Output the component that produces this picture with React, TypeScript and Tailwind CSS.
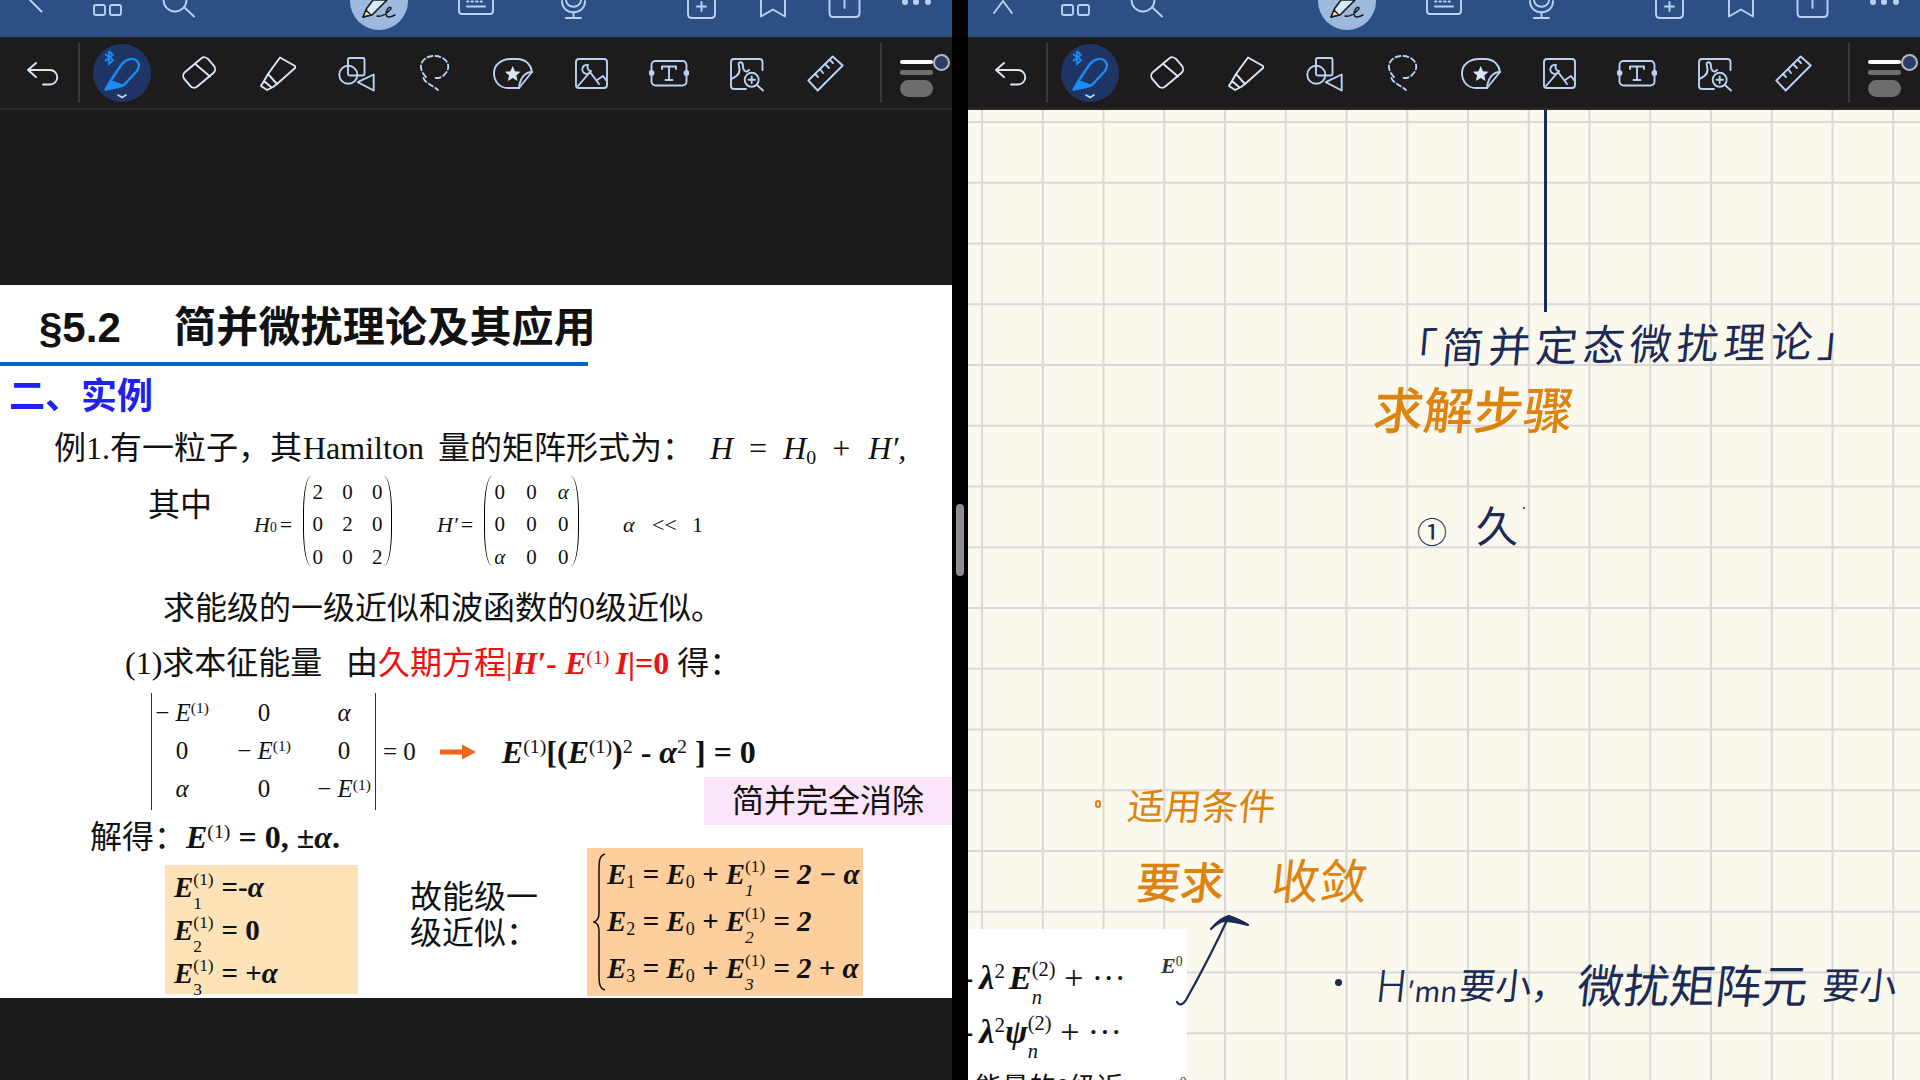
const stroke = { fill: 'none', stroke: '#b9d2f3', strokeWidth: 1.9, strokeLinecap: 'round', strokeLinejoin: 'round' } as const
const light = { ...stroke, stroke: '#dbe6f5' }

function TopBar({ close }: { close?: boolean }) {
  return (
    <div className="flex h-[37px] w-[952px] overflow-hidden bg-[#2c4f84]">
      <svg className="ml-[16px]" width="40" height="37" viewBox="16 0 40 37" {...stroke}>
        {close ? <path d="M26 13 L35 1 L44 13" /> : <path d="M30 0 L41.5 11.5" />}
      </svg>
      <svg className="ml-[31px]" width="40" height="37" viewBox="87 0 40 37" {...stroke}>
        <rect x="94" y="5" width="11" height="10" rx="2" />
        <rect x="110" y="5" width="11" height="10" rx="2" />
      </svg>
      <svg className="ml-[31px]" width="40" height="37" viewBox="158 0 40 37" {...stroke}>
        <circle cx="175" cy="0" r="11.5" />
        <path d="M185 8 L194 16.5" />
      </svg>
      <svg className="ml-[152px]" width="58" height="37" viewBox="350 0 58 37">
        <circle cx="379" cy="1" r="29" fill="#9db9dd" />
        <path d="M363 17 L367 8 L373 0 H387 L372 15 Z" fill="#d6ecfb" stroke="#1a1a1a" strokeWidth="1.6" strokeLinejoin="round" />
        <path d="M363 17 L366 10 L371 15 Z" fill="#f3dca6" stroke="#1a1a1a" strokeWidth="1.4" strokeLinejoin="round" />
        <path d="M377 16 C381 17 386 14 390 10 C393 7 389 6 387 10 C385 14 386 17 389 17 C391 17 393 16 395 15" fill="none" stroke="#1a1a1a" strokeWidth="1.5" strokeLinecap="round" />
      </svg>
      <svg className="ml-[48px]" width="40" height="37" viewBox="456 0 40 37" {...stroke}>
        <path d="M459 0 V11 C459 13 460 14 462 14 H490 C492 14 493 13 493 11 V0" />
        <path d="M467 6.5 H485" />
        <path d="M467 1.5 H485" strokeDasharray="1.5 3" />
      </svg>
      <svg className="ml-[57px]" width="40" height="37" viewBox="553 0 40 37" {...stroke}>
        <path d="M566 0 C566 9 581 9 581 0" />
        <path d="M562 1 C562 16 585 16 585 1" />
        <path d="M573.5 13 V18 M566 18 H581" />
      </svg>
      <svg className="ml-[88px]" width="40" height="37" viewBox="681 0 40 37" {...stroke}>
        <path d="M688 0 V14 C688 16.5 689.5 18 692 18 H711 C713.5 18 715 16.5 715 14 V0" />
        <path d="M701.5 2 V11 M697 6.5 H706" />
      </svg>
      <svg className="ml-[32px]" width="40" height="37" viewBox="753 0 40 37" {...stroke}>
        <path d="M761 0 V16.5 L773 9.5 L785 16.5 V0" />
      </svg>
      <svg className="ml-[31px]" width="40" height="37" viewBox="824 0 40 37" {...stroke}>
        <path d="M829.5 0 V13 C829.5 15.5 831 17 833.5 17 H855.5 C858 17 859.5 15.5 859.5 13 V0" />
        <path d="M844.5 0 V8" />
      </svg>
      <svg className="ml-[32px]" width="40" height="37" viewBox="896 0 40 37" fill="#b9d2f3">
        <circle cx="905" cy="2" r="3" />
        <circle cx="916" cy="2" r="3" />
        <circle cx="928" cy="2" r="3" />
      </svg>
    </div>
  )
}

function Tool({ children }: { children: React.ReactNode }) {
  return (
    <div className="flex w-[78.1px] shrink-0 items-center justify-center">
      <svg width="40" height="40" viewBox="0 0 40 40">
        {children}
      </svg>
    </div>
  )
}

function Toolbar() {
  return (
    <div className="flex h-[73px] w-[952px] border-t border-[#241f14] border-b-2 border-b-[#2c2a2b] bg-[#1d1b1c] pl-[3px]">
      <div className="flex w-[75px] shrink-0 items-center justify-center">
        <svg className="ml-[5px]" width="40" height="40" viewBox="0 0 40 40" {...light}>
          <path d="M13 10 L5 17 L13 24 M5 17 H27 A7.2 7.2 0 0 1 27 31.5 H20" />
        </svg>
      </div>
      <div className="my-[5px] mr-[3px] w-[2px] shrink-0 bg-[#3a3839]" />
      <div className="flex w-[78.1px] shrink-0 items-center justify-center">
        <svg width="58" height="60" viewBox="0 0 58 60">
          <circle cx="29" cy="30" r="29" fill="#1f3565" />
          <path d="M18 37 L29 21 C33 16 41 14 44 18 C47 21 46 25 44 28 L31 42 L25 44 L12.5 46.5 Z" fill="none" stroke="#1c8cf2" strokeWidth="2.4" strokeLinejoin="round" />
          <path d="M18 37 L31 42 L25 44 L12.5 46.5 Z" fill="#1c8cf2" />
          <path d="M16 8 V21 L20 17 L12 11 M16 8 L20 12 L12 18" fill="none" stroke="#1c8cf2" strokeWidth="1.8" />
          <path d="M25 52 L29 54.5 L33 52" fill="none" stroke="#c5d8f5" strokeWidth="1.6" strokeLinecap="round" />
        </svg>
      </div>
      <Tool>
        <g {...light}>
          <rect x="3.7" y="10" width="31" height="19" rx="5" transform="rotate(-40 19.2 19.5)" />
          <path d="M15 10.8 L30 23.5" />
        </g>
      </Tool>
      <Tool>
        <g {...light}>
          <path d="M22 4.5 L37 13 V15 L19 31 L10 21 Z" />
          <path d="M10 21 L6 28 L3 33 L9 37 L15 34 L19 31 M6 28 L13 34" />
        </g>
      </Tool>
      <Tool>
        <g {...stroke}>
          <rect x="12" y="5" width="16.5" height="17.5" rx="1.5" />
          <circle cx="12.3" cy="21.8" r="9" />
          <path d="M37.7 21.5 L21.7 29.2 L37.7 37.5 Z" />
        </g>
      </Tool>
      <Tool>
        <g {...stroke}>
          <path d="M12 24 C2 14 8 3 20 3 C33 3 39 14 30 22 C27 25 22 26 19 24" strokeDasharray="5 3" />
          <path d="M9.5 25 C11 30 18 32 24 37" strokeDasharray="5 3" />
        </g>
      </Tool>
      <Tool>
        <g {...stroke}>
          <path d="M26 35 H15 C6 35 1 28 1 20 C1 12 8 6 18 6 H24 C33 6 38 12 39 19 Z" />
          <path d="M39 19 C33 19 27 24 26 35" />
          <path d="M19.7 13 L22 18.3 L27.5 18.8 L23.3 22.4 L24.6 28 L19.7 25 L14.8 28 L16.1 22.4 L12 18.8 L17.4 18.3 Z" fill="#dbe6f5" stroke="none" />
        </g>
      </Tool>
      <Tool>
        <g {...stroke}>
          <rect x="5" y="6" width="31" height="29" rx="3" />
          <path d="M17 12 A4.5 4.5 0 1 0 20 18 A4 4 0 0 1 17 12 Z" />
          <path d="M7 33 L19 19 L28 31 M26 27 L32 23 L35 27" />
        </g>
      </Tool>
      <Tool>
        <g {...stroke}>
          <rect x="2.5" y="8" width="35" height="24.5" rx="4" />
          <path d="M13 16 V13.5 H27 V16 M20 13.5 V27 M16.5 27 H23.5" />
          <circle cx="2.5" cy="20" r="2" fill="#b9d2f3" />
          <circle cx="37.5" cy="20" r="2" fill="#b9d2f3" />
        </g>
      </Tool>
      <Tool>
        <g {...stroke}>
          <path d="M35.5 17 V9 C35.5 7 34.5 6 32.5 6 H7 C5 6 4 7 4 9 V33 C4 35 5 36 7 36 H19" />
          <path d="M4 26 C10 24 14 20 12 13 C10 8 16 8 16 13 C16 18 19 20 22 17" />
          <circle cx="24.7" cy="26.8" r="7" />
          <path d="M24.7 23.5 V30 M21.5 26.8 H28 M30 32 L36 37.5" />
        </g>
      </Tool>
      <Tool>
        <g {...stroke}>
          <path d="M27.7 3.5 L37.7 12.5 L12.7 37.5 L3.3 27.5 Z" />
          <path d="M10 21 L13 24 M15 16 L18 20 M20 11 L24 15 M25 7 L28 10" />
        </g>
      </Tool>
      <div className="my-[5px] ml-[16px] w-[2px] shrink-0 bg-[#3a3839]" />
      <div className="relative ml-[18px] flex w-[33px] shrink-0 flex-col pt-[22px]">
        <div className="h-[4px] rounded-full bg-white" />
        <div className="mt-[6px] h-[5px] rounded-full bg-[#6e6c6d]" />
        <div className="mt-[5px] h-[17px] rounded-[9px] bg-[#6e6c6d]" />
        <div className="absolute top-[16px] left-[33px] h-[17px] w-[17px] rounded-full border-2 border-[#b9b8c0] bg-[#2c3c63]" />
      </div>
    </div>
  )
}

function Up({ children }: { children: React.ReactNode }) {
  return <sup className="text-[0.62em] not-italic font-normal">{children}</sup>
}

function Dn({ children }: { children: React.ReactNode }) {
  return <sub className="text-[0.62em] not-italic font-normal">{children}</sub>
}

// subscript with the superscript stacked over it
function Stk({ d, u }: { d: string; u: string }) {
  return (
    <span className="relative inline-block h-0 w-[0.72em] font-normal">
      <span className="absolute bottom-[0.47em] left-0 text-[0.6em] leading-none not-italic whitespace-nowrap">{u}</span>
      <span className="absolute top-[-0.08em] left-0 text-[0.6em] leading-none">{d}</span>
    </span>
  )
}

function Matrix({ cells, w, cols }: { cells: string[]; w: string; cols: string }) {
  return (
    <div className={`relative h-[90px] ${w}`}>
      <div className="absolute top-0 left-0 h-[90px] w-[8px] rounded-l-[10px_45px] border-l-[1.5px] border-black" />
      <div className={`-mt-[4px] grid h-[98px] grid-rows-3 ${cols} place-items-center text-[21px] leading-none`}>
        {cells.map((c, i) => (
          <span key={i} className={c === 'α' ? 'italic' : ''}>{c}</span>
        ))}
      </div>
      <div className="absolute top-0 right-0 h-[90px] w-[8px] rounded-r-[10px_45px] border-r-[1.5px] border-black" />
    </div>
  )
}

function Slide() {
  return (
    <div className="h-[713px] w-full overflow-hidden bg-white text-[#111] font-['Liberation_Serif','Noto_Sans_CJK_SC',serif]">
      <div className="flex h-[77px] items-center pt-[9px] pl-[39px] text-[42px] leading-none font-bold text-[#111] whitespace-nowrap font-['Liberation_Sans','Noto_Sans_CJK_SC',sans-serif]">
        <span className="w-[135px]">§5.2</span>
        <span className="tracking-[0.2px]">简并微扰理论及其应用</span>
      </div>
      <div className="h-[4px] w-[588px] bg-[#0066cc]" />
      <div className="flex h-[62px] items-center pl-[9px] text-[36px] leading-none font-bold text-[#1f22ee] font-['Liberation_Sans','Noto_Sans_CJK_SC',sans-serif]">
        二、实例
      </div>
      <div className="flex h-[40px] items-center pl-[54px] text-[32px] leading-none whitespace-nowrap">
        <span className="w-[249px]">例1.有一粒子，其</span>
        <span className="w-[135px]">Hamilton</span>
        <span className="w-[272px]">量的矩阵形式为：</span>
        <span className="italic">H<span className="not-italic ml-[16px]">=</span><span className="ml-[16px]">H</span><Dn>0</Dn><span className="not-italic ml-[16px]">+</span><span className="ml-[18px]">H′,</span></span>
      </div>
      <div className="flex h-[119px] items-start pl-[148px]">
        <div className="w-[106px] pt-[20px] text-[32px] leading-[34px]">其中</div>
        <div className="mt-[12px] flex h-[90px] w-[49px] items-center text-[22px] italic leading-none">
          H<Dn>0</Dn><span className="not-italic ml-[3px]">=</span>
        </div>
        <div className="mt-[12px]">
          <Matrix w="w-[89px]" cols="grid-cols-3" cells={['2', '0', '0', '0', '2', '0', '0', '0', '2']} />
        </div>
        <div className="mt-[12px] ml-[45px] flex h-[90px] w-[47px] items-center text-[22px] italic leading-none">
          H′<span className="not-italic ml-[3px]">=</span>
        </div>
        <div className="mt-[12px]">
          <Matrix w="w-[95px]" cols="grid-cols-3" cells={['0', '0', 'α', '0', '0', '0', 'α', '0', '0']} />
        </div>
        <div className="mt-[12px] ml-[44px] flex h-[90px] items-center text-[22px] leading-none">
          <span className="w-[29px] italic">α</span>
          <span className="w-[40px]">&lt;&lt;</span>
          <span>1</span>
        </div>
      </div>
      <div className="flex h-[42px] items-center pl-[163px] text-[32px] leading-none whitespace-nowrap">
        求能级的一级近似和波函数的0级近似。
      </div>
      <div className="flex h-[64px] items-center pt-[4px] pl-[125px] text-[32px] leading-none whitespace-nowrap">
        <span className="w-[221px]">(1)求本征能量</span>
        <span>由</span>
        <span className="text-[#ee1111]">
          久期方程|<b className="italic">H′- E</b><Up>(1)</Up><b className="italic ml-[6px]">I</b><b>|=0</b>
        </span>
        <span className="ml-[8px]">得：</span>
      </div>
      <div className="flex h-[155px] w-full">
        <div className="w-[704px] shrink-0">
          <div className="flex h-[117px] items-center pl-[151px]">
            <div className="grid h-[117px] w-[225px] shrink-0 grid-cols-[60px_104px_56px] grid-rows-3 place-items-center border-x border-[#333] pb-[2px] text-[25px] leading-none whitespace-nowrap">
              <span>− <i>E</i><Up>(1)</Up></span>
              <span>0</span>
              <span className="italic">α</span>
              <span>0</span>
              <span>− <i>E</i><Up>(1)</Up></span>
              <span>0</span>
              <span className="italic">α</span>
              <span>0</span>
              <span>− <i>E</i><Up>(1)</Up></span>
            </div>
            <span className="ml-[7px] shrink-0 text-[25px] leading-none">= 0</span>
            <svg className="ml-[24px] shrink-0" width="36" height="18" viewBox="0 0 36 18">
              <path d="M0 6.5 H22 V1.5 L36 9 L22 16.5 V11.5 H0 Z" fill="#f4651e" />
            </svg>
            <span className="ml-[26px] shrink-0 text-[32px] leading-none font-bold whitespace-nowrap">
              <i>E</i><Up>(1)</Up>[(<i>E</i><Up>(1)</Up>)<Up>2</Up> - <i>α</i><Up>2</Up> ] = 0
            </span>
          </div>
          <div className="flex h-[38px] items-center pt-[16px] pl-[90px] text-[32px] leading-none whitespace-nowrap">
            <span className="w-[96px]">解得：</span>
            <b><i>E</i><Up>(1)</Up> = 0, ±<i>α</i>.</b>
          </div>
        </div>
        <div className="mt-[84px] flex h-[48px] flex-1 items-center justify-center bg-[#fbe5fb] text-[32px] leading-none whitespace-nowrap">
          简并完全消除
        </div>
      </div>
      <div className="flex h-[150px]">
        <div className="mt-[17px] ml-[165px] flex h-[129px] w-[193px] shrink-0 flex-col justify-center gap-[7px] bg-[#fee2b8] pl-[9px] text-[29px] leading-[36px] font-bold whitespace-nowrap">
          <span><i>E</i><Stk d="1" u="(1)" /> =-<i>α</i></span>
          <span><i>E</i><Stk d="2" u="(1)" /> = 0</span>
          <span><i>E</i><Stk d="3" u="(1)" /> = +<i>α</i></span>
        </div>
        <div className="mt-[31px] ml-[52px] w-[125px] shrink-0 text-[32px] leading-[36px] whitespace-nowrap">
          故能级一<br />级近似：
        </div>
        <div className="ml-[52px] flex h-[148px] w-[276px] shrink-0 items-center bg-[#fecf9c] pl-[6px]">
          <svg className="shrink-0" width="14" height="138" viewBox="0 0 14 138" fill="none" stroke="#111" strokeWidth="1.5">
            <path d="M12 1 C5 3 6 10 6 30 V60 C6 66 4 68 1 69 C4 70 6 72 6 78 V108 C6 128 5 135 12 137" />
          </svg>
          <div className="flex flex-col gap-[11px] pb-[3px] text-[29px] leading-[36px] font-bold italic whitespace-nowrap">
            <span>E<Dn>1</Dn> = E<Dn>0</Dn> + E<Stk d="1" u="(1)" /> = 2 − α</span>
            <span>E<Dn>2</Dn> = E<Dn>0</Dn> + E<Stk d="2" u="(1)" /> = 2</span>
            <span>E<Dn>3</Dn> = E<Dn>0</Dn> + E<Stk d="3" u="(1)" /> = 2 + α</span>
          </div>
        </div>
      </div>
    </div>
  )
}

function Notes() {
  return (
    <div className="relative h-[970px] w-[952px] overflow-hidden bg-[#fbf8ee] bg-[linear-gradient(to_right,#d8d8d8_2px,transparent_2px),linear-gradient(to_bottom,#d8d8d8_2px,transparent_2px)] bg-[size:60.75px_60.75px] bg-[position:13px_11px] font-['Noto_Sans_CJK_SC',sans-serif]">
      <div className="absolute top-0 left-[576px] h-[202px] w-[3px] bg-[#1c2b55]" />
      <div className="absolute top-[204px] left-[427px] -rotate-1 -skew-x-6 text-[42px] leading-[56px] tracking-[5px] text-[#1c2b55] whitespace-nowrap">
        「简并定态微扰理论」
      </div>
      <div className="absolute top-[265px] left-[406px] -skew-x-6 text-[50px] leading-[64px] font-medium text-[#dd8310] whitespace-nowrap">
        求解步骤
      </div>
      <div className="absolute top-[400px] left-[449px] text-[30px] leading-[40px] text-[#1c2b55]">①</div>
      <div className="absolute top-[387px] left-[508px] text-[42px] leading-[54px] text-[#1c2b55]">久</div>
      <div className="absolute top-[397px] left-[555px] h-[2px] w-[2px] rounded-full bg-[#1c2b55]" />
      <div className="absolute top-[690px] left-[127px] h-[8px] w-[6px] rounded-full border-2 border-[#dd8310]" />
      <div className="absolute top-[664px] left-[160px] -skew-x-6 text-[37px] leading-[60px] text-[#dd8310] whitespace-nowrap">
        适用条件
      </div>
      <div className="absolute top-[740px] left-[169px] -skew-x-6 text-[44px] leading-[60px] font-medium text-[#dd8310] whitespace-nowrap">
        要求
      </div>
      <div className="absolute top-[738px] left-[304px] -skew-x-6 text-[48px] leading-[60px] text-[#dd8310] whitespace-nowrap">
        收敛
      </div>

      <div className="absolute top-[819px] left-0 h-[151px] w-[219px] overflow-hidden bg-white font-['Liberation_Serif','Noto_Sans_CJK_SC',serif] text-[#111]">
        <div className="absolute top-[24px] left-[-6px] text-[34px] leading-[50px] whitespace-nowrap">
          -<i className="ml-[6px] font-bold">λ</i><Up>2</Up><b className="italic ml-[4px]">E</b><span className="italic"><Stk d="n" u="(2)" /></span><span className="ml-[8px]">+ ···</span>
        </div>
        <div className="absolute top-[78px] left-[-6px] text-[34px] leading-[50px] whitespace-nowrap">
          -<i className="ml-[6px] font-bold">λ</i><Up>2</Up><b className="italic">ψ</b><span className="italic"><Stk d="n" u="(2)" /></span><span className="ml-[8px]">+ ···</span>
        </div>
        <div className="absolute top-[22px] left-[193px] text-[22px] leading-[30px] font-bold italic text-[#333]">
          E<Up>0</Up>
        </div>
        <div className="absolute top-[141px] left-[7px] text-[27px] leading-[36px] whitespace-nowrap">能量的0级近</div>
        <div className="absolute top-[143px] left-[197px] text-[22px] leading-[30px] font-bold italic text-[#333]">
          E<Up>0</Up>
        </div>
      </div>

      <svg className="absolute top-[800px] left-[200px]" width="90" height="110" viewBox="0 0 90 110" fill="none" stroke="#1c2b55" strokeWidth="2.2" strokeLinecap="round" strokeLinejoin="round">
        <path d="M9 92 C11 96 15 95 18 90 C32 65 50 30 61 6" />
        <path d="M43 19 C48 13 55 7 61 6 C67 8 74 11 80 15 C72 13 62 11 56 11 C52 12 47 15 43 19 Z" fill="#1c2b55" />
      </svg>

      <div className="absolute top-[869px] left-[367px] h-[7px] w-[7px] rounded-full bg-[#1c2b55]" />
      <div className="absolute top-[843px] left-[408px] -skew-x-6 text-[28px] leading-[60px] text-[#1c2b55] whitespace-nowrap">
        <span className="text-[44px] font-light">H</span>′mn
      </div>
      <div className="absolute top-[843px] left-[492px] -skew-x-6 text-[36px] leading-[60px] text-[#1c2b55] whitespace-nowrap">要小，</div>
      <div className="absolute top-[843px] left-[610px] -skew-x-6 text-[46px] leading-[60px] text-[#1c2b55] whitespace-nowrap">微扰矩阵元</div>
      <div className="absolute top-[843px] left-[855px] -skew-x-6 text-[37px] leading-[60px] text-[#1c2b55] whitespace-nowrap">要小</div>
    </div>
  )
}

export default function App() {
  return (
    <div className="flex h-[1080px] w-[1920px] overflow-hidden bg-black">
      <div className="flex w-[952px] flex-col">
        <TopBar />
        <Toolbar />
        <div className="flex-1 bg-[#1c1a1b] pt-[175px]">
          <Slide />
        </div>
      </div>
      <div className="flex w-[16px] justify-center pt-[504px]">
        <div className="h-[72px] w-[8px] rounded-full bg-[#8e8c92]" />
      </div>
      <div className="flex w-[952px] flex-col">
        <TopBar close />
        <Toolbar />
        <Notes />
      </div>
    </div>
  )
}
